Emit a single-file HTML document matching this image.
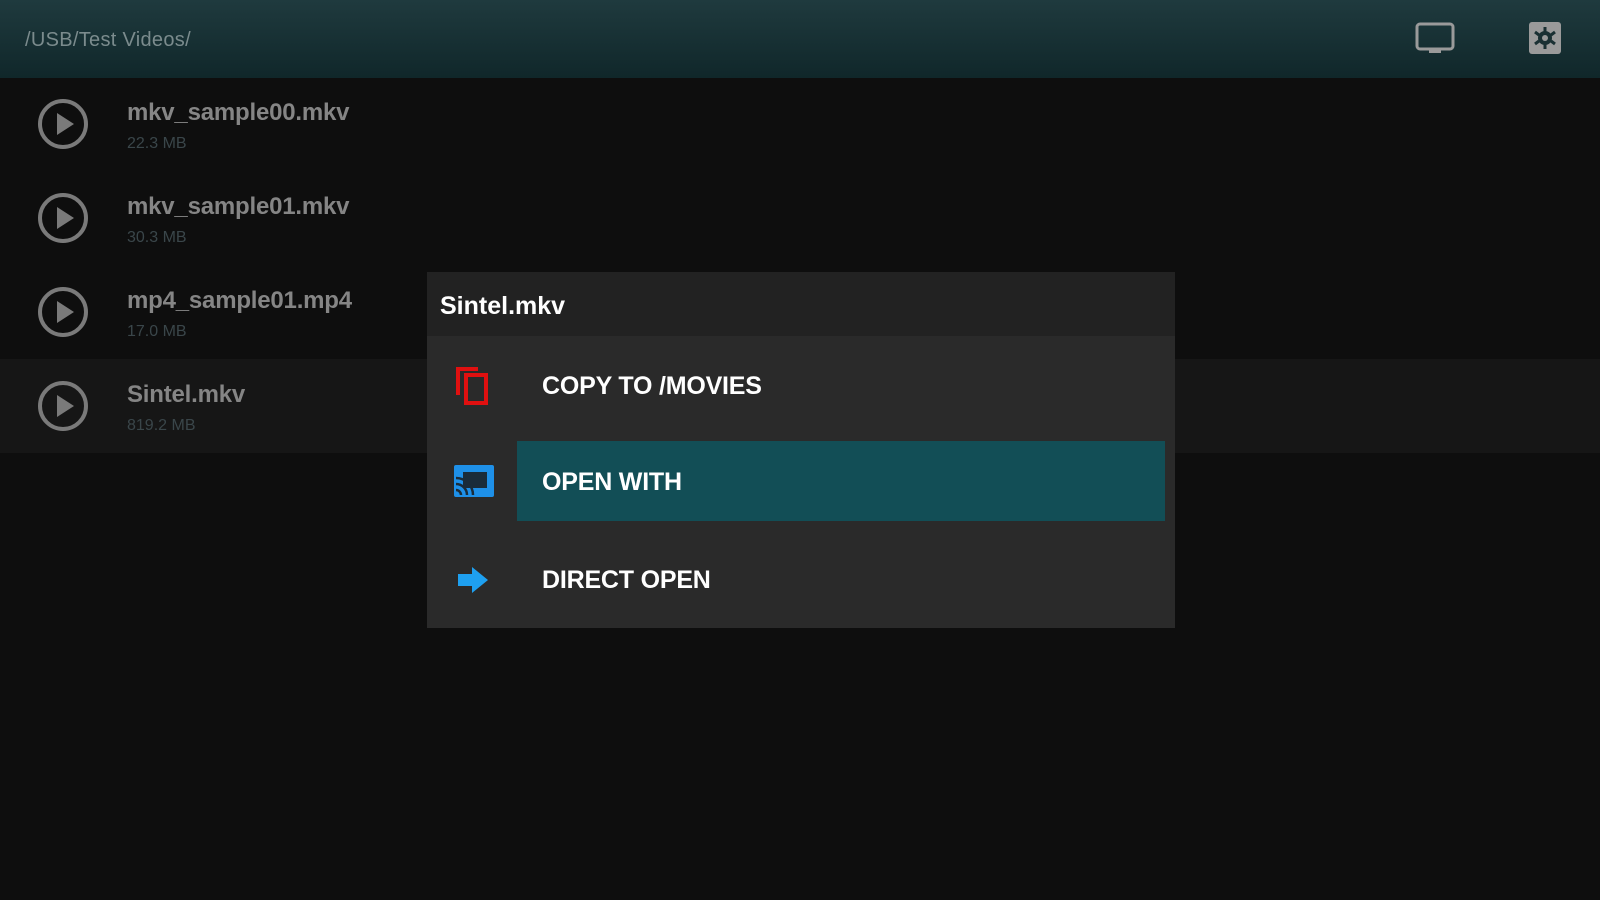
<!DOCTYPE html>
<html><head><style>
body{margin:0;width:1600px;height:900px;background:#0e0e0e;font-family:"Liberation Sans",sans-serif;position:relative;overflow:hidden}
.hdr{position:absolute;left:0;top:0;width:1600px;height:78px;background:linear-gradient(#1f3a3e,#10272a)}
.path{position:absolute;left:25px;top:29px;font-size:20px;color:#7b8b8d;letter-spacing:0.3px}
.row{position:absolute;left:0;width:1600px;height:94px}
.row svg{position:absolute;left:37px;top:21px}
.t{position:absolute;left:127px;top:22px;font-size:24px;font-weight:bold;color:#858585;letter-spacing:-0.2px}
.s{position:absolute;left:127px;top:58px;font-size:16px;color:#3a464a}
.dlg{position:absolute;left:427px;top:272px;width:748px;height:356px;background:#2a2a2a}
.dh{position:absolute;left:0;top:0;width:748px;height:64px;background:#222}
.dt{position:absolute;left:13px;top:20px;font-size:25px;font-weight:bold;color:#fff}
.it{position:absolute;left:115px;font-size:25px;font-weight:bold;color:#fff;letter-spacing:-0.2px}
.hl{position:absolute;left:90px;top:169px;width:648px;height:80px;background:#124e56}
</style></head><body>
<div class="hdr"><div class="path">/USB/Test Videos/</div>
<svg style="position:absolute;left:1415px;top:22px" width="40" height="34" viewBox="0 0 40 34"><rect x="2" y="2" width="36" height="25" rx="3" fill="none" stroke="#9a9a9a" stroke-width="3"/><rect x="14" y="27" width="12" height="4" fill="#9a9a9a"/></svg>
<svg style="position:absolute;left:1529px;top:22px" width="32" height="32" viewBox="0 0 32 32"><rect x="0" y="0" width="32" height="32" rx="3" fill="#9a9a9a"/><circle cx="16" cy="16" r="7" fill="#1a3033"/><circle cx="16" cy="16" r="3" fill="#9a9a9a"/><path d="M16 5v5M16 22v5M6 10l4 3M22 19l4 3M6 22l4-3M22 13l4-3" stroke="#1a3033" stroke-width="3"/></svg>
</div>
<div class="row" style="top:77px"><svg width="52" height="52"><circle cx="26" cy="26" r="23" fill="none" stroke="#7a7a7a" stroke-width="4"/><path d="M20 15v22l17-11z" fill="#7a7a7a"/></svg><div class="t">mkv_sample00.mkv</div><div class="s">22.3 MB</div></div>
<div class="row" style="top:171px"><svg width="52" height="52"><circle cx="26" cy="26" r="23" fill="none" stroke="#7a7a7a" stroke-width="4"/><path d="M20 15v22l17-11z" fill="#7a7a7a"/></svg><div class="t">mkv_sample01.mkv</div><div class="s">30.3 MB</div></div>
<div class="row" style="top:265px"><svg width="52" height="52"><circle cx="26" cy="26" r="23" fill="none" stroke="#7a7a7a" stroke-width="4"/><path d="M20 15v22l17-11z" fill="#7a7a7a"/></svg><div class="t">mp4_sample01.mp4</div><div class="s">17.0 MB</div></div>
<div class="row" style="top:359px;background:#161616"><svg width="52" height="52"><circle cx="26" cy="26" r="23" fill="none" stroke="#7a7a7a" stroke-width="4"/><path d="M20 15v22l17-11z" fill="#7a7a7a"/></svg><div class="t">Sintel.mkv</div><div class="s">819.2 MB</div></div>
<div class="dlg">
<div class="dh"><div class="dt">Sintel.mkv</div></div>
<svg style="position:absolute;left:27px;top:93px" width="40" height="42" viewBox="0 0 40 42"><path d="M4 30V4h20" fill="none" stroke="#e01010" stroke-width="4"/><rect x="12" y="10" width="20" height="28" fill="none" stroke="#e01010" stroke-width="4"/></svg>
<div class="it" style="top:100px">COPY TO /MOVIES</div>
<div class="hl"></div>
<svg style="position:absolute;left:26px;top:192px" width="42" height="34" viewBox="0 0 42 34"><rect x="1" y="1" width="40" height="32" rx="2" fill="#1e90e8"/><rect x="10" y="8" width="24" height="16" fill="#1a2c3a"/><path d="M3 14a17 17 0 0 1 17 17M3 20a11 11 0 0 1 11 11M3 26a5 5 0 0 1 5 5" fill="none" stroke="#1a2c3a" stroke-width="2.5"/></svg>
<div class="it" style="top:196px">OPEN WITH</div>
<svg style="position:absolute;left:29px;top:294px" width="34" height="28" viewBox="0 0 34 28"><path d="M2 8h14V1l16 13-16 13v-7H2z" fill="#1ea0f0"/></svg>
<div class="it" style="top:294px">DIRECT OPEN</div>
</div>
</body></html>
